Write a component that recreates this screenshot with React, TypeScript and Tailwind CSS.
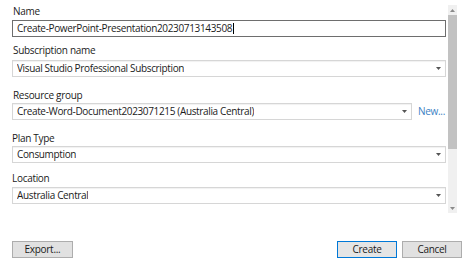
import React from "react";

const font = { fontFamily: '"Open Sans", "Noto Sans", sans-serif' };

function Arrow() {
  return (
    <svg width="5" height="3" viewBox="0 0 5 3" className="shrink-0">
      <path d="M0 0 L5 0 L2.5 3 Z" fill="#555" />
    </svg>
  );
}

function Select({ value, className = "" }: { value: string; className?: string }) {
  return (
    <div
      className={`flex h-[17px] items-center justify-between border border-[#d6d6d6] bg-white pl-[4px] pr-[4px] shadow-[inset_0_1px_1px_rgba(0,0,0,0.06)] ${className}`}
    >
      <span className="truncate text-[10px] leading-[15px] tracking-[-0.35px] text-[#1b1b1b]">{value}</span>
      <Arrow />
    </div>
  );
}

function Label({ children, className = "" }: { children: React.ReactNode; className?: string }) {
  return (
    <div className={`h-[14px] text-[10px] leading-[14px] tracking-[-0.3px] text-[#1b1b1b] ${className}`}>{children}</div>
  );
}

export default function App() {
  return (
    <div className="h-[264px] w-[474px] overflow-hidden bg-white pl-[12px]" style={font}>
      <div className="flex">
        <div className="w-[434px]">
          <Label className="ml-[1px] mt-[4px]">Name</Label>
          <div className="mt-[2px] flex h-[17px] items-center border border-[#6e6e6e] bg-white pl-[4px]">
            <span className="text-[10px] leading-[15px] tracking-[-0.35px] text-[#1b1b1b]">
              Create-PowerPoint-Presentation20230713143508
            </span>
            <span className="ml-px h-[11px] w-px bg-black" />
          </div>

          <Label className="ml-[1px] mt-[6px]">Subscription name</Label>
          <Select className="mt-[3px]" value="Visual Studio Professional Subscription" />

          <Label className="ml-[1px] mt-[11px]">Resource group</Label>
          <div className="mt-[1px] flex items-center">
            <Select className="w-[400px]" value="Create-Word-Document2023071215 (Australia Central)" />
            <span className="ml-[6px] text-[10px] leading-[15px] tracking-[-0.3px] text-[#3b7fc4]">New...</span>
          </div>

          <Label className="mt-[11px]">Plan Type</Label>
          <Select className="mt-[1px]" value="Consumption" />

          <Label className="mt-[8px]">Location</Label>
          <Select className="mt-[2px]" value="Australia Central" />
        </div>

        <div className="ml-[2px] mt-[5px] flex h-[208px] w-[9px] flex-col items-center bg-[#f0f0f0]">
          <svg width="5" height="3" viewBox="0 0 5 3" className="mt-[4px]">
            <path d="M0 3 L5 3 L2.5 0 Z" fill="#8a8a8a" />
          </svg>
          <div className="mt-[3px] h-[134px] w-[9px] bg-[#c2c2c2]" />
          <div className="flex-1" />
          <svg width="5" height="3" viewBox="0 0 5 3" className="mb-[3px]">
            <path d="M0 0 L5 0 L2.5 3 Z" fill="#8a8a8a" />
          </svg>
        </div>
      </div>

      <div className="mt-[28px] flex items-center pr-[12px]">
        <button className="h-[17px] w-[61px] border border-[#adadad] bg-[#e1e1e1] text-[10px] leading-[15px] tracking-[-0.3px] text-[#1b1b1b]">
          Export...
        </button>
        <div className="flex-1" />
        <button className="h-[17px] w-[60px] border border-[#0078d7] bg-[#e5e5e5] text-[10px] leading-[15px] tracking-[-0.3px] text-[#1b1b1b]">
          Create
        </button>
        <button className="ml-[5px] h-[17px] w-[60px] border border-[#adadad] bg-[#e1e1e1] text-[10px] leading-[15px] tracking-[-0.3px] text-[#1b1b1b]">
          Cancel
        </button>
      </div>
    </div>
  );
}
